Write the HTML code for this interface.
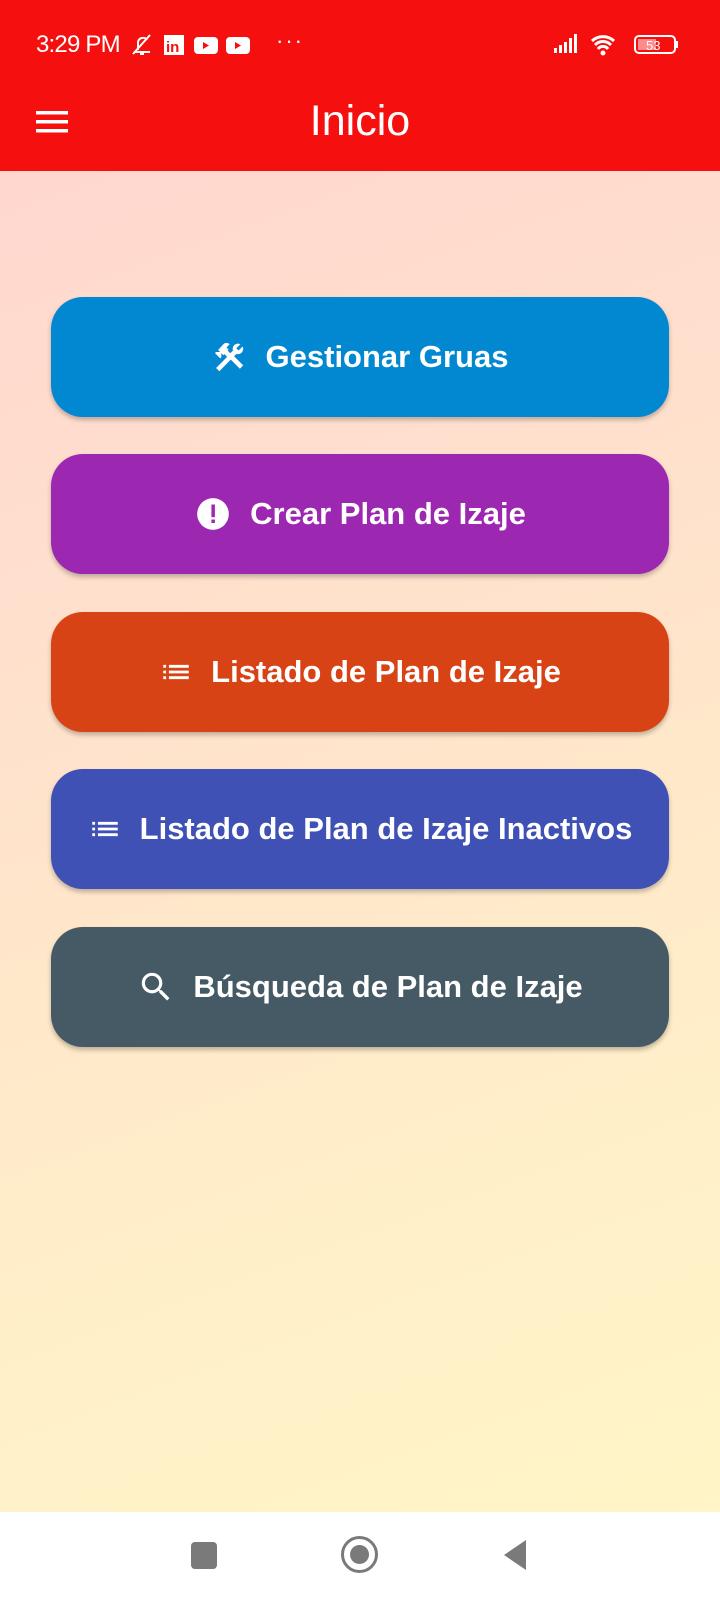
<!DOCTYPE html>
<html><head><meta charset="utf-8"><style>
*{margin:0;padding:0;box-sizing:border-box}
body{width:720px;height:1600px;overflow:hidden;font-family:"Liberation Sans",sans-serif;position:relative;background:linear-gradient(160deg,#ffd3d0 0%,#ffe2cc 40%,#fff0c8 75%,#fff6c6 100%)}
.hdr{position:absolute;left:0;top:0;width:720px;height:171px;background:#f50f0f;color:#fff}
.st{position:absolute;top:31px;left:36px;font-size:24px;letter-spacing:-0.8px}
.title{position:absolute;top:97px;left:0;width:720px;text-align:center;font-size:43px}
.btn{position:absolute;left:51px;width:618px;height:120px;border-radius:32px;color:#fff;font-size:31px;font-weight:bold;display:flex;align-items:center;justify-content:center;gap:18px;box-shadow:0 3px 5px rgba(0,0,0,.25)}
.nav{position:absolute;left:0;top:1512px;width:720px;height:88px;background:#fff}
</style></head><body>
<div class="hdr">
<div class="st">3:29 PM</div>
<svg style="position:absolute;left:130px;top:32px" width="130" height="26">
<path d="M4 20h16M8 18V10a5 5 0 0 1 9-2M3 22L20 3M10 22h4" stroke="#fff" stroke-width="2" fill="none"/>
<rect x="34" y="3" width="20" height="20" fill="#fff"/><text x="36" y="20" font-size="15" font-weight="bold" fill="#f50f0f" font-family="Liberation Sans">in</text>
<rect x="64" y="5" width="24" height="17" rx="4" fill="#fff"/><path d="M73 10l6 3.5-6 3.5z" fill="#f50f0f"/>
<rect x="96" y="5" width="24" height="17" rx="4" fill="#fff"/><path d="M105 10l6 3.5-6 3.5z" fill="#f50f0f"/>
</svg>
<div style="position:absolute;left:276px;top:28px;font-size:22px;letter-spacing:2px">···</div>
<svg style="position:absolute;left:552px;top:32px" width="130" height="26">
<rect x="2" y="16" width="3" height="5" fill="#fff"/><rect x="7" y="13" width="3" height="8" fill="#fff"/><rect x="12" y="10" width="3" height="11" fill="#fff"/><rect x="17" y="6" width="3" height="15" fill="#fff"/><rect x="22" y="2" width="3" height="19" fill="#fff"/>
<path d="M40 9a16 16 0 0 1 22 0M43 13a11 11 0 0 1 16 0M46 17a6 6 0 0 1 10 0" stroke="#fff" stroke-width="3" fill="none"/><circle cx="51" cy="21" r="2.5" fill="#fff"/>
<rect x="83" y="4" width="40" height="17" rx="4" stroke="#fff" stroke-width="2" fill="none"/><rect x="86" y="7" width="18" height="11" fill="#ff8a8a"/><rect x="124" y="9" width="2" height="7" fill="#fff"/>
<text x="94" y="18" font-size="13" fill="#fff" font-family="Liberation Sans">53</text>
</svg>
<svg style="position:absolute;left:36px;top:110px" width="32" height="24"><rect y="1" width="32" height="3.5" fill="#fff"/><rect y="10" width="32" height="3.5" fill="#fff"/><rect y="19" width="32" height="3.5" fill="#fff"/></svg>
<div class="title">Inicio</div>
</div>
<div class="btn" style="top:297px;background:#0288d1"><svg width="36" height="36" viewBox="0 0 24 24"><path fill="#fff" d="M13.8 10.6l-2.2 2.2 7 7 2.2-2.2zM17.3 10.1c1.9 0 3.5-1.6 3.5-3.5 0-.6-.2-1.1-.4-1.6l-2.7 2.7-1.5-1.5 2.7-2.7c-.5-.2-1-.4-1.6-.4-1.9 0-3.5 1.600-3.5 3.5 0 .4.1.8.2 1.1l-1.8 1.8-1.8-1.8.7-.7-1.4-1.4 2.1-2.1c-1.2-1.2-3.1-1.2-4.2 0L4.1 7.3l1.4 1.4H2.7l-.7.7 3.5 3.5.7-.7V9.4l1.4 1.4.7-.7 1.8 1.8-7.4 7.4 2.2 2.2L16.2 10c.3.1.7.1 1.1.1z"/></svg>Gestionar Gruas</div>
<div class="btn" style="top:454px;background:#9c27b0"><svg width="38" height="38" viewBox="0 0 24 24"><circle cx="12" cy="12" r="10" fill="#fff"/><rect x="11" y="6" width="2.2" height="8" fill="#9c27b0"/><rect x="11" y="15.5" width="2.2" height="2.2" fill="#9c27b0"/></svg>Crear Plan de Izaje</div>
<div class="btn" style="top:612px;background:#d84315"><svg width="34" height="34" viewBox="0 0 24 24"><path fill="#fff" d="M3 13h2v-2H3zm0 4h2v-2H3zm0-8h2V7H3zm4 4h14v-2H7zm0 4h14v-2H7zM7 7v2h14V7z"/></svg>Listado de Plan de Izaje</div>
<div class="btn" style="top:769px;background:#3f51b5"><svg width="34" height="34" viewBox="0 0 24 24"><path fill="#fff" d="M3 13h2v-2H3zm0 4h2v-2H3zm0-8h2V7H3zm4 4h14v-2H7zm0 4h14v-2H7zM7 7v2h14V7z"/></svg>Listado de Plan de Izaje Inactivos</div>
<div class="btn" style="top:927px;background:#455a64"><svg width="38" height="38" viewBox="0 0 24 24"><path fill="#fff" d="M15.5 14h-.8l-.3-.3c1-1.1 1.6-2.6 1.6-4.2a6.5 6.5 0 1 0-6.5 6.5c1.6 0 3.1-.6 4.2-1.6l.3.3v.8l5 5 1.5-1.5zm-6 0C7 14 5 12 5 9.5S7 5 9.5 5 14 7 14 9.5 12 14 9.5 14z"/></svg>Búsqueda de Plan de Izaje</div>
<div class="nav">
<div style="position:absolute;left:191px;top:30px;width:26px;height:27px;border-radius:4px;background:#7a7a7a"></div>
<div style="position:absolute;left:341px;top:24px;width:37px;height:37px;border-radius:50%;border:3px solid #7a7a7a"></div>
<div style="position:absolute;left:350px;top:33px;width:19px;height:19px;border-radius:50%;background:#7a7a7a"></div>
<svg style="position:absolute;left:502px;top:27px" width="26" height="32"><path d="M24 1L2 16l22 15z" fill="#7a7a7a"/></svg>
</div>
</body></html>
